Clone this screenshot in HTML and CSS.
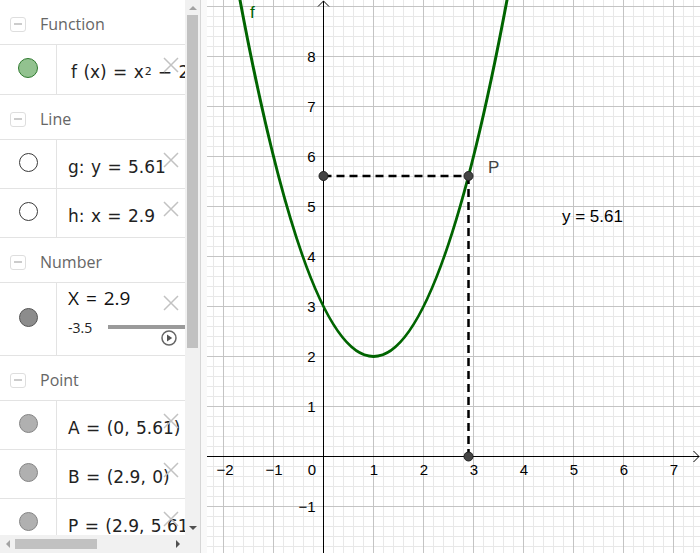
FILE: index.html
```html
<!DOCTYPE html>
<html>
<head>
<meta charset="utf-8">
<link rel="stylesheet" href="styles.css">
</head>
<body>
<div class="app">
  <div class="algebra">
    <div class="list">
      <div class="head"><span class="toggle"></span><span class="gtitle">Function</span></div>
      <div class="item item-f">
        <div class="mark"><span class="dot dot-green"></span></div>
        <div class="expr">f (x) = x<sup>2</sup>− 2x + 3</div>
        <svg class="del" viewBox="0 0 16 16"><path d="M1 1L15 15M15 1L1 15"/></svg>
      </div>
      <div class="head"><span class="toggle"></span><span class="gtitle">Line</span></div>
      <div class="item">
        <div class="mark"><span class="dot dot-white"></span></div>
        <div class="expr">g: y = 5.61</div>
        <svg class="del" viewBox="0 0 16 16"><path d="M1 1L15 15M15 1L1 15"/></svg>
      </div>
      <div class="item">
        <div class="mark"><span class="dot dot-white"></span></div>
        <div class="expr">h: x = 2.9</div>
        <svg class="del" viewBox="0 0 16 16"><path d="M1 1L15 15M15 1L1 15"/></svg>
      </div>
      <div class="head"><span class="toggle"></span><span class="gtitle">Number</span></div>
      <div class="item item-slider">
        <div class="mark"><span class="dot dot-dark"></span></div>
        <div class="slider">
          <div class="slider-val">X = 2.9</div>
          <div class="slider-line"><span class="smin">-3.5</span><span class="track"></span></div>
        </div>
        <svg class="del" viewBox="0 0 16 16"><path d="M1 1L15 15M15 1L1 15"/></svg>
        <svg class="play" viewBox="0 0 16 16"><circle cx="8" cy="8" r="7"/><path d="M6 4.6L11.2 8L6 11.4Z"/></svg>
      </div>
      <div class="head"><span class="toggle"></span><span class="gtitle">Point</span></div>
      <div class="item">
        <div class="mark"><span class="dot dot-grey"></span></div>
        <div class="expr">A = (0, 5.61)</div>
        <svg class="del" viewBox="0 0 16 16"><path d="M1 1L15 15M15 1L1 15"/></svg>
      </div>
      <div class="item">
        <div class="mark"><span class="dot dot-grey"></span></div>
        <div class="expr">B = (2.9, 0)</div>
        <svg class="del" viewBox="0 0 16 16"><path d="M1 1L15 15M15 1L1 15"/></svg>
      </div>
      <div class="item">
        <div class="mark"><span class="dot dot-grey"></span></div>
        <div class="expr">P = (2.9, 5.61)</div>
        <svg class="del" viewBox="0 0 16 16"><path d="M1 1L15 15M15 1L1 15"/></svg>
      </div>
    </div>
    <div class="vscroll">
      <div class="abox"><span class="tri tri-up"></span></div>
      <div class="vthumb"></div>
      <div class="spacer"></div>
      <div class="abox"><span class="tri tri-down"></span></div>
      <div class="corner"></div>
    </div>
    <div class="hscroll">
      <div class="abox"><span class="tri tri-left"></span></div>
      <div class="hthumb"></div>
      <div class="spacer"></div>
      <div class="abox"><span class="tri tri-right"></span></div>
    </div>
  </div>
  <div class="splitter"></div>
  <div class="graphics">
    <svg width="493" height="553" viewBox="0 0 493 553">
      <defs>
        <pattern id="grid" width="50" height="50" patternUnits="userSpaceOnUse" x="16" y="6">
          <path d="M10.5 0V50M20.5 0V50M30.5 0V50M40.5 0V50M0 10.5H50M0 20.5H50M0 30.5H50M0 40.5H50" stroke="#e8e8e8" stroke-width="1" fill="none"/>
          <path d="M0.5 0V50M0 0.5H50" stroke="#c4c4c4" stroke-width="1" fill="none"/>
        </pattern>
      </defs>
      <rect width="493" height="553" fill="#fff"/>
      <rect width="493" height="553" fill="url(#grid)"/>
      <g class="axes">
        <path d="M0 456.5H492"/>
        <path d="M486.5 451L492 456.5L486.5 462"/>
        <path d="M116.5 553V1"/>
        <path d="M111 6.5L116.5 1L122 6.5"/>
      </g>
      <g class="ax">
        <text x="18" y="475" text-anchor="middle">−2</text>
        <text x="67" y="475" text-anchor="middle">−1</text>
        <text x="109" y="475" text-anchor="end">0</text>
        <text x="167" y="475" text-anchor="middle">1</text>
        <text x="217" y="475" text-anchor="middle">2</text>
        <text x="267" y="475" text-anchor="middle">3</text>
        <text x="317" y="475" text-anchor="middle">4</text>
        <text x="367" y="475" text-anchor="middle">5</text>
        <text x="417" y="475" text-anchor="middle">6</text>
        <text x="467" y="475" text-anchor="middle">7</text>
        <text x="108.5" y="412" text-anchor="end">1</text>
        <text x="108.5" y="362" text-anchor="end">2</text>
        <text x="108.5" y="312" text-anchor="end">3</text>
        <text x="108.5" y="262" text-anchor="end">4</text>
        <text x="108.5" y="212" text-anchor="end">5</text>
        <text x="108.5" y="162" text-anchor="end">6</text>
        <text x="108.5" y="112" text-anchor="end">7</text>
        <text x="108.5" y="62" text-anchor="end">8</text>
        <text x="108.5" y="512" text-anchor="end">−1</text>
      </g>
      <path class="curve" d="M26.5 -35.5Q166.5 748.5 306.5 -35.5"/>
      <path class="dash" d="M116.5 176H261.5"/>
      <path class="dash" d="M261.5 176V456.5"/>
      <circle class="pt" cx="116.5" cy="176" r="4.5"/>
      <circle class="pt" cx="261.5" cy="456.5" r="4.5"/>
      <circle class="pt" cx="261.5" cy="176" r="4.5"/>
      <text class="lbl-f" x="43" y="18">f</text>
      <text class="lbl-p" x="281" y="173">P</text>
      <text class="lbl-y" x="355" y="222">y = 5.61</text>
    </svg>
  </div>
</div>
</body>
</html>
```
FILE: styles.css
```css
html, body {
  margin: 0;
  padding: 0;
  background: #fff;
}
body {
  width: 700px;
  height: 553px;
  overflow: hidden;
  font-family: "Open Sans", "Noto Sans", sans-serif;
}
.app {
  display: flex;
  height: 553px;
}
.algebra {
  flex: none;
  width: 200px;
  display: grid;
  grid-template-columns: 185px 15px;
  grid-template-rows: 535px 18px;
}
.list {
  grid-column: 1;
  grid-row: 1;
  overflow: hidden;
}
.head {
  height: 45px;
  box-sizing: border-box;
  border-bottom: 1px solid #e3e3e3;
  display: flex;
  align-items: center;
  padding-top: 4px;
}
.toggle {
  flex: none;
  width: 14px;
  height: 13px;
  margin-left: 10px;
  border: 1px solid #dedede;
  border-radius: 3px;
  display: flex;
  align-items: center;
  justify-content: center;
}
.toggle::after {
  content: "";
  width: 8px;
  height: 2px;
  background: #cccccc;
}
.gtitle {
  margin-left: 14px;
  font-size: 16px;
  color: #666;
}
.item {
  position: relative;
  height: 49px;
  box-sizing: border-box;
  border-bottom: 1px solid #e3e3e3;
  display: flex;
}
.item-f { height: 50px; }
.item-slider { height: 73px; }
.mark {
  flex: none;
  width: 57px;
  box-sizing: border-box;
  border-right: 1px solid #e3e3e3;
  display: flex;
  align-items: center;
  justify-content: center;
  padding-bottom: 3px;
}
.dot {
  width: 19px;
  height: 19px;
  box-sizing: border-box;
  border-radius: 50%;
  border: 1.5px solid #333;
}
.dot-green { background: #92c28f; border-color: #2f7a2f; width: 20px; height: 20px; }
.dot-white { background: #fff; border-color: #3a3a3a; }
.dot-dark { background: #8c8c8c; border-color: #555; }
.dot-grey { background: #b0b0b0; border-color: #858585; }
.expr {
  padding-left: 11px;
  padding-top: 6px;
  display: flex;
  align-items: center;
  white-space: pre;
  font-family: "DejaVu Sans", sans-serif;
  font-size: 17px;
  color: #222;
  word-spacing: 1px;
}
.item-f .expr { padding-left: 14px; padding-top: 5px; }
sup {
  font-size: 11px;
  line-height: 0;
  vertical-align: 8px;
  margin-left: 1px;
  margin-right: 6px;
}
.del {
  position: absolute;
  left: 163px;
  top: 12px;
  width: 16px;
  height: 16px;
  fill: none;
  stroke: #c2c2c2;
  stroke-width: 1.5;
}
.slider {
  padding-left: 11px;
  padding-top: 3px;
  display: flex;
  flex-direction: column;
  white-space: nowrap;
}
.slider-val {
  font-size: 19px;
  line-height: 24px;
  color: #111;
  word-spacing: 2px;
}
.slider-line {
  display: flex;
  align-items: center;
  height: 22px;
  margin-top: 6px;
}
.smin {
  font-size: 14px;
  color: #222;
}
.track {
  margin-left: 16px;
  width: 120px;
  height: 4px;
  background: #9a9a9a;
}
.play {
  position: absolute;
  left: 161px;
  top: 47px;
  width: 16px;
  height: 16px;
}
.play circle { fill: #fff; stroke: #666; stroke-width: 1.5; }
.play path { fill: #555; }
.vscroll {
  grid-column: 2;
  grid-row: 1 / span 2;
  background: #f1f1f1;
  display: flex;
  flex-direction: column;
  align-items: center;
}
.hscroll {
  grid-column: 1;
  grid-row: 2;
  background: #f1f1f1;
  display: flex;
  align-items: center;
}
.abox {
  flex: none;
  width: 15px;
  height: 15px;
  display: flex;
  align-items: center;
  justify-content: center;
}
.spacer { flex: 1; }
.corner { flex: none; height: 18px; }
.vthumb {
  flex: none;
  width: 11px;
  height: 333px;
  background: #c1c1c1;
}
.hthumb {
  flex: none;
  width: 82px;
  height: 10px;
  background: #c1c1c1;
}
.tri { width: 0; height: 0; }
.tri-up {
  border-left: 4px solid transparent;
  border-right: 4px solid transparent;
  border-bottom: 4px solid #a3a3a3;
}
.tri-down {
  border-left: 4px solid transparent;
  border-right: 4px solid transparent;
  border-top: 4px solid #505050;
}
.tri-left {
  border-top: 4px solid transparent;
  border-bottom: 4px solid transparent;
  border-right: 4px solid #a3a3a3;
}
.tri-right {
  border-top: 4px solid transparent;
  border-bottom: 4px solid transparent;
  border-left: 4px solid #505050;
}
.splitter {
  flex: none;
  width: 6px;
  border-left: 1px solid #d6d6d6;
  background: #f9f9f9;
}
.graphics {
  flex: 1;
  overflow: hidden;
}
.graphics svg { display: block; }
.axes path {
  stroke: #000;
  stroke-width: 1;
  fill: none;
}
.ax text {
  font-family: "Liberation Sans", Arial, sans-serif;
  font-size: 15px;
  fill: #000;
}
.curve {
  fill: none;
  stroke: #006400;
  stroke-width: 3;
}
.dash {
  fill: none;
  stroke: #000;
  stroke-width: 2.5;
  stroke-dasharray: 8 5;
}
.pt {
  fill: #444;
  stroke: #222;
  stroke-width: 1;
}
.lbl-f {
  font-family: "Liberation Sans", Arial, sans-serif;
  font-size: 17px;
  fill: #006400;
}
.lbl-p {
  font-family: "Liberation Sans", Arial, sans-serif;
  font-size: 17px;
  fill: #444;
}
.lbl-y {
  font-family: "Liberation Sans", Arial, sans-serif;
  font-size: 17px;
  fill: #000;
}
```
